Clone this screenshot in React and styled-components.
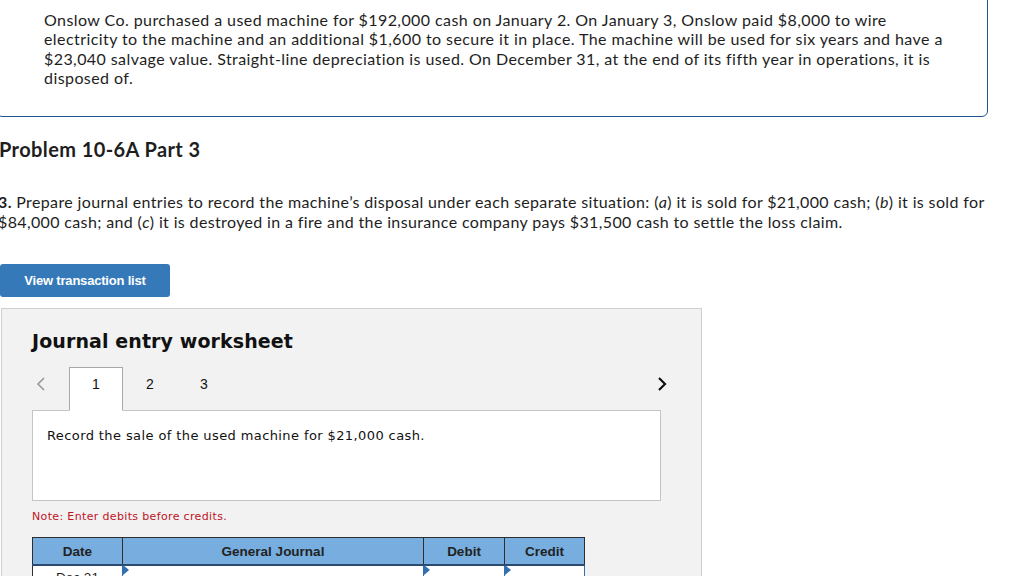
import React from "react";
import styled, { createGlobalStyle } from "styled-components";

const Global = createGlobalStyle`
  html, body { margin: 0; padding: 0; background: #fff; overflow: hidden; }
  body { font-family: "Lato", "Open Sans", sans-serif; color: #1b1b1b; }
`;

const Page = styled.div`
  width: 1024px;
  height: 576px;
  overflow: hidden;
  display: flex;
  flex-direction: column;
  align-items: flex-start;
  & > * { flex-shrink: 0; }
`;

const IntroCard = styled.div`
  box-sizing: border-box;
  width: 992px;
  margin: -20px 0 0 -4px;
  padding: 29px 20px 29px 47px;
  border: 1px solid #1a5493;
  border-radius: 6px;
  font-size: 16px;
  letter-spacing: 0.42px;
  line-height: 19.33px;
  color: #1e1e1e;
`;

const Heading = styled.h2`
  margin: 20px 0 0 -1px;
  font-size: 20px;
  letter-spacing: 0.4px;
  line-height: 24px;
  font-weight: 700;
  color: #1e1e1e;
  font-family: "Lato", "Open Sans", sans-serif;
`;

const Question = styled.p`
  margin: 31px 0 0 -2px;
  font-size: 16px;
  letter-spacing: 0.36px;
  line-height: 20px;
  color: #1e1e1e;
  white-space: nowrap;
  b { font-weight: 700; }
  i { font-style: italic; }
`;

const ActionButton = styled.button`
  margin: 32px 0 0 0;
  width: 170px;
  height: 33px;
  border: none;
  border-radius: 3px;
  background: #3579b9;
  color: #fff;
  font-family: "Liberation Sans", Arial, sans-serif;
  font-weight: 700;
  font-size: 13px;
  letter-spacing: -0.2px;
  cursor: pointer;
`;

const Worksheet = styled.section`
  box-sizing: border-box;
  margin: 11px 0 0 1px;
  width: 701px;
  height: 320px;
  background: #f2f2f2;
  border: 1px solid #cfcfcf;
  border-bottom: none;
  padding: 20px 40px 0 30px;
  font-family: "DejaVu Sans", Verdana, sans-serif;
`;

const WorksheetTitle = styled.h3`
  margin: 0;
  font-size: 19px;
  line-height: 24px;
  font-weight: 700;
  color: #111;
  letter-spacing: 0.1px;
`;

const TabRow = styled.div`
  display: flex;
  align-items: stretch;
  margin-top: 14px;
  height: 44px;
  position: relative;
  z-index: 1;
`;

const Arrow = styled.button`
  width: 37px;
  border: none;
  background: transparent;
  padding: 8px 0 0;
  display: flex;
  align-items: flex-start;
  justify-content: ${(p) => (p.$right ? "flex-end" : "flex-start")};
  color: ${(p) => (p.$right ? "#111" : "#999")};
  margin-left: ${(p) => (p.$right ? "auto" : "0")};
  margin-right: ${(p) => (p.$right ? "-10px" : "0")};
`;

const Tab = styled.div`
  box-sizing: border-box;
  width: 54px;
  display: flex;
  align-items: flex-start;
  justify-content: center;
  padding-top: 8px;
  font-family: "Liberation Sans", Arial, sans-serif;
  font-size: 14px;
  line-height: 16px;
  color: #111;
  background: ${(p) => (p.$active ? "#fff" : "transparent")};
  border: 1px solid ${(p) => (p.$active ? "#a8a8a8" : "transparent")};
  border-bottom: 1px solid ${(p) => (p.$active ? "#fff" : "transparent")};
`;

const PromptBox = styled.div`
  box-sizing: border-box;
  margin-top: -1px;
  height: 91px;
  width: 629px;
  background: #fff;
  border: 1px solid #c4c4c4;
  padding: 16px 14px;
  font-size: 13px;
  letter-spacing: 0.4px;
  line-height: 17px;
  color: #111;
`;

const Note = styled.p`
  margin: 9px 0 0;
  font-size: 11px;
  letter-spacing: 0.35px;
  line-height: 14px;
  color: #c0121f;
`;

const Table = styled.table`
  margin-top: 13px;
  border-collapse: collapse;
  width: 550px;
  font-family: "Liberation Sans", Arial, sans-serif;
  table-layout: fixed;
`;

const Th = styled.th`
  width: ${(p) => p.$w}px;
  height: 26px;
  background: #77aedf;
  color: #222;
  font-size: 13.5px;
  font-weight: 700;
  border: 1px solid #2e2e2e;
  border-bottom: 2px solid #2b4a6f;
  padding: 0;
`;

const Td = styled.td`
  position: relative;
  height: 24px;
  background: #fff;
  border-left: 1px solid ${(p) => (p.$first ? "#2e2e2e" : "#3c6ea8")};
  border-right: 1px solid #3c6ea8;
  font-size: 13.5px;
  text-align: center;
  vertical-align: top;
  padding: 4px 0 0;
  color: #222;
`;

const Marker = styled.span`
  position: absolute;
  top: 0;
  left: 0;
  width: 0;
  height: 0;
  border-top: 5px solid transparent;
  border-bottom: 5px solid transparent;
  border-left: 6px solid #2f6fb3;
  transform: translateY(-1px);
`;

const Chevron = ({ dir, size = 18, stroke = 2 }) => (
  <svg width={size} height={size} viewBox="0 0 18 18" fill="none">
    <path
      d={dir === "left" ? "M12 3 L6 9 L12 15" : "M6 3 L12 9 L6 15"}
      stroke="currentColor"
      strokeWidth={stroke}
      strokeLinecap="butt"
      strokeLinejoin="miter"
    />
  </svg>
);

export default function App() {
  return (
    <>
      <Global />
      <Page>
        <IntroCard>
          Onslow Co. purchased a used machine for $192,000 cash on January 2. On January 3, Onslow paid $8,000 to wire
          <br />
          electricity to the machine and an additional $1,600 to secure it in place. The machine will be used for six years and have a
          <br />
          $23,040 salvage value. Straight-line depreciation is used. On December 31, at the end of its fifth year in operations, it is
          <br />
          disposed of.
        </IntroCard>
        <Heading>Problem 10-6A Part 3</Heading>
        <Question>
          <b>3.</b> Prepare journal entries to record the machine’s disposal under each separate situation: (<i>a</i>) it is sold for $21,000 cash; (<i>b</i>) it is sold for
          <br />
          $84,000 cash; and (<i>c</i>) it is destroyed in a fire and the insurance company pays $31,500 cash to settle the loss claim.
        </Question>
        <ActionButton>View transaction list</ActionButton>
        <Worksheet>
          <WorksheetTitle>Journal entry worksheet</WorksheetTitle>
          <TabRow>
            <Arrow aria-label="previous">
              <Chevron dir="left" stroke={1.6} />
            </Arrow>
            <Tab $active>1</Tab>
            <Tab>2</Tab>
            <Tab>3</Tab>
            <Arrow $right aria-label="next">
              <Chevron dir="right" stroke={2.2} />
            </Arrow>
          </TabRow>
          <PromptBox>Record the sale of the used machine for $21,000 cash.</PromptBox>
          <Note>Note: Enter debits before credits.</Note>
          <Table>
            <thead>
              <tr>
                <Th $w={89}>Date</Th>
                <Th $w={300}>General Journal</Th>
                <Th $w={80}>Debit</Th>
                <Th $w={79}>Credit</Th>
              </tr>
            </thead>
            <tbody>
              <tr>
                <Td $first>Dec 31</Td>
                <Td><Marker /></Td>
                <Td><Marker /></Td>
                <Td><Marker /></Td>
              </tr>
            </tbody>
          </Table>
        </Worksheet>
      </Page>
    </>
  );
}
